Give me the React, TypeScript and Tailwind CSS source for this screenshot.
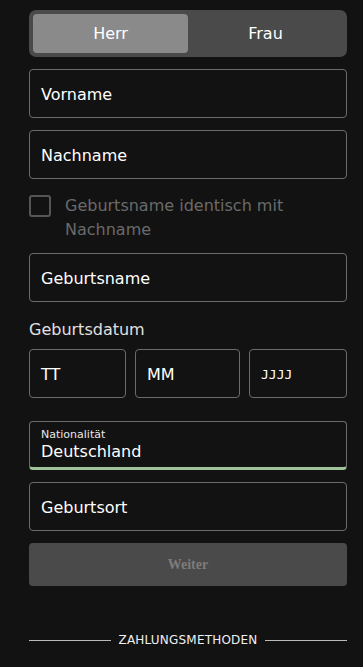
import React from "react";

const font = { fontFamily: '"DejaVu Sans", Verdana, sans-serif' };

function Field({ label }: { label: string }) {
  return (
    <div className="h-[49px] rounded-[4px] border border-[#6b6b6b] bg-[#121212] flex items-center px-[11px] pt-[2px] text-[16px] text-white">
      {label}
    </div>
  );
}

export default function App() {
  return (
    <div className="min-h-[667px] bg-[#121212] pl-[29px] pr-[16px] pt-[10px] text-white" style={font}>
      {/* Anrede */}
      <div className="h-[47px] rounded-[7px] bg-[#4a4a4a] p-[4px] flex">
        <div className="flex-1 rounded-[4px] bg-[#8a8a8a] flex items-center justify-center text-[16px]">
          Herr
        </div>
        <div className="flex-1 flex items-center justify-center text-[16px]">Frau</div>
      </div>

      <div className="mt-[12px] flex flex-col gap-[12px]">
        <Field label="Vorname" />
        <Field label="Nachname" />
      </div>

      {/* Checkbox */}
      <div className="mt-[16px] flex items-start gap-[14px]">
        <div className="h-[22px] w-[22px] shrink-0 rounded-[3px] border-2 border-[#555555]" />
        <div className="text-[16px] leading-[24px] text-[#6a6a6a] -mt-[1px]">
          Geburtsname identisch mit Nachname
        </div>
      </div>

      <div className="mt-[11px]">
        <Field label="Geburtsname" />
      </div>

      <div className="mt-[18px] text-[16px] leading-[20px] text-[#e0e0e0]">Geburtsdatum</div>

      <div className="mt-[9px] grid grid-cols-[97px_1fr_98px] gap-[9px]">
        <Field label="TT" />
        <Field label="MM" />
        <div
          className="h-[49px] rounded-[4px] border border-[#6b6b6b] flex items-center px-[11px] pt-[2px] text-[13px] text-white"
          style={{ fontFamily: '"DejaVu Sans Mono", monospace' }}
        >
          JJJJ
        </div>
      </div>

      {/* Nationalität */}
      <div className="mt-[23px] h-[49px] rounded-[4px] border border-[#6b6b6b] border-b-[3px] border-b-[#9fc49b] px-[11px] pt-[6px]">
        <div className="text-[11px] leading-[14px] text-[#e8e8e8]">Nationalität</div>
        <div className="text-[16px] leading-[20px] text-white">Deutschland</div>
      </div>

      <div className="mt-[12px]">
        <Field label="Geburtsort" />
      </div>

      <div
        className="mt-[12px] h-[43px] rounded-[4px] bg-[#4a4a4a] flex items-center justify-center text-[14px] font-bold text-[#7c7c7c]"
        style={{ fontFamily: '"Liberation Serif", "Times New Roman", serif' }}
      >
        Weiter
      </div>

      <div className="mt-[46px] flex items-center gap-[8px]">
        <div className="h-px flex-1 bg-[#bbbbbb]" />
        <div className="text-[12px] leading-[16px] text-[#f0f0f0] tracking-[0.2px]">ZAHLUNGSMETHODEN</div>
        <div className="h-px flex-1 bg-[#bbbbbb]" />
      </div>
    </div>
  );
}
